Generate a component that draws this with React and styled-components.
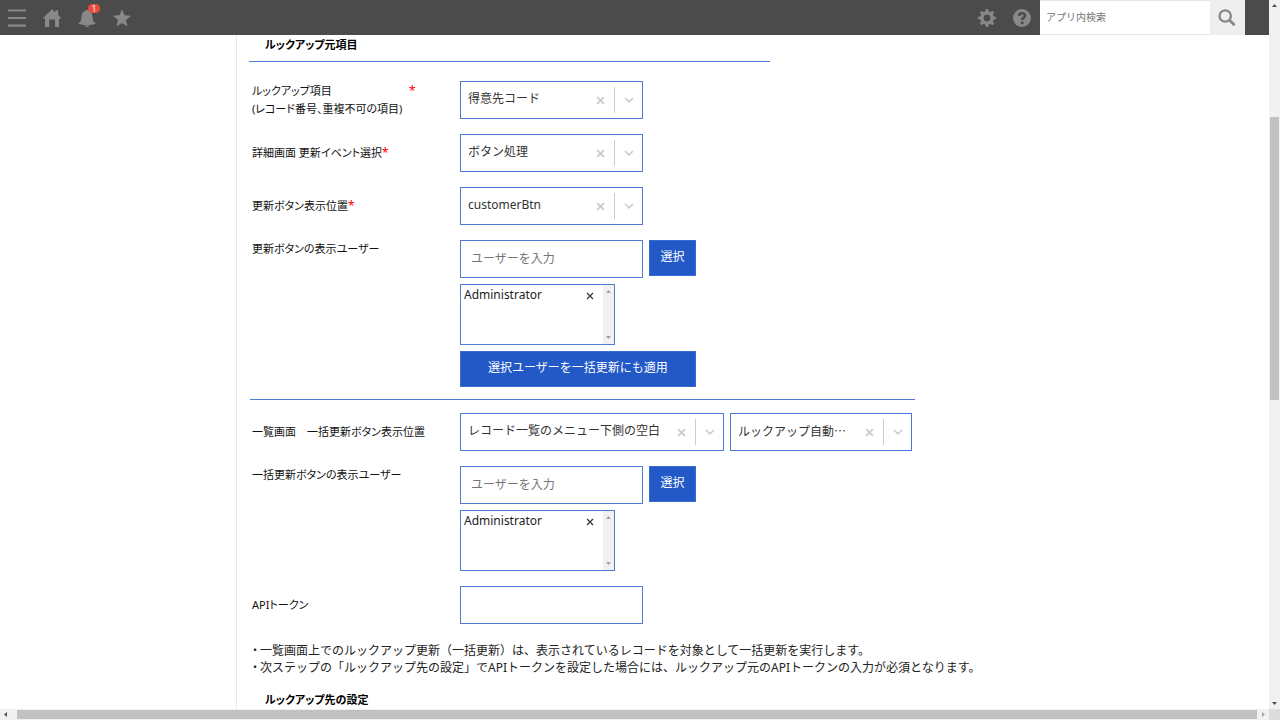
import React, { useState } from 'react'
import styled, { createGlobalStyle } from 'styled-components'

const GlobalStyle = createGlobalStyle`
  * {
    box-sizing: border-box;
  }
  body {
    margin: 0;
    background: #fff;
    color: #222;
    font-family: 'Noto Sans', 'Noto Sans CJK JP', sans-serif;
    font-size: 12px;
    line-height: 18px;
  }
  button, input, select {
    margin: 0;
    font: inherit;
    border-radius: 0;
  }
`

const Page = styled.div`
  display: grid;
  grid-template-columns: minmax(0, 1fr) 11px;
  grid-template-rows: 35px minmax(0, 1fr) 11px;
  height: 100vh;
  overflow: hidden;
`

const Header = styled.header`
  display: flex;
  justify-content: space-between;
  background: #4b4b4b;
  padding-right: 24px;
`

const HeaderGroup = styled.div`
  display: flex;
`

const IconButton = styled.button`
  position: relative;
  display: flex;
  align-items: center;
  justify-content: center;
  width: 35px;
  height: 35px;
  padding: 0 1px 0 0;
  border: none;
  background: none;
  color: #888;
  cursor: pointer;
`

const Badge = styled.span`
  position: absolute;
  top: 4px;
  right: 5px;
  width: 12px;
  height: 9px;
  border-radius: 5px;
  background: #e74c3c;
  color: #fff;
  font-size: 8px;
  line-height: 9px;
  text-align: center;
`

const Search = styled.form`
  display: flex;
`

const SearchInput = styled.input`
  width: 170px;
  height: 35px;
  padding: 0 6px 2px;
  border: 1px solid #e3e7e8;
  border-width: 1px 0;
  background: #fff;
  font-size: 10px;
  &::placeholder {
    color: #757575;
  }
`

const SearchButton = styled(IconButton)`
  background: #eee;
`

const Main = styled.main`
  min-height: 0;
  margin-left: 236px;
  border-left: 1px solid #e8e8e8;
  padding: 1px 0 0 12px;
  overflow: hidden;
`

const Title = styled.h2`
  margin: 0;
  padding-left: 16px;
  color: #000;
  font-size: 11px;
  font-weight: 700;
  line-height: 18px;
  font-feature-settings: 'palt';
`

const Divider = styled.hr`
  width: ${(props) => props.$width};
  margin: ${(props) => props.$margin};
  border: none;
  border-top: 1px solid #4f7bd3;
`

const Form = styled.div`
  display: flex;
  flex-direction: column;
  gap: 15px;
  padding-left: 3px;
`

const Row = styled.div`
  display: grid;
  grid-template-columns: 208px minmax(0, 1fr);
  align-items: ${(props) => (props.$top ? 'start' : 'center')};
`

const Label = styled.label`
  display: flex;
  color: #111;
  font-size: 11px;
  font-feature-settings: 'palt';
`

const LabelText = styled.span`
  min-width: ${(props) => (props.$wide ? '157px' : '0')};
`

const Required = styled.span`
  color: #f00;
  font-size: 12px;
`

const Line = styled.div`
  display: flex;
  gap: 6px;
`

const Stack = styled.div`
  display: flex;
  flex-direction: column;
  align-items: flex-start;
  gap: 6px;
`

const SelectBox = styled.div`
  display: flex;
  align-items: center;
  width: ${(props) => props.$width || '183px'};
  height: 38px;
  border: 1px solid #4f7bd3;
  background: #fff;
`

const SelectInput = styled.select`
  flex: 1;
  min-width: 0;
  height: 36px;
  padding: 0 0 2px 7px;
  border: none;
  outline: none;
  background: none;
  color: #333;
  appearance: none;
  font-family: ${(props) => (props.$cjk ? "'Noto Sans CJK JP', sans-serif" : 'inherit')};
`

const ClearButton = styled.button`
  display: flex;
  align-items: center;
  justify-content: center;
  width: 27px;
  height: 36px;
  padding: 0;
  border: none;
  background: none;
  color: #ccc;
`

const Separator = styled.span`
  width: 1px;
  height: 26px;
  background: #ccc;
`

const Chevron = styled.span`
  display: flex;
  justify-content: center;
  width: 27px;
  color: #ccc;
`

const TextInput = styled.input`
  width: 183px;
  height: 38px;
  padding: 0 10px 2px;
  border: 1px solid #4f7bd3;
  background: #fff;
  &::placeholder {
    color: #757575;
  }
`

const PrimaryButton = styled.button`
  width: ${(props) => props.$width || '47px'};
  height: 36px;
  padding: 0 0 2px;
  border: 1px solid #3a6acd;
  background: #2259c7;
  color: #fff;
  white-space: nowrap;
  cursor: pointer;
`

const UserList = styled.div`
  display: flex;
  width: 155px;
  height: 61px;
  border: 1px solid #4f7bd3;
`

const UserItem = styled.div`
  display: flex;
  flex: 1;
  align-items: center;
  justify-content: space-between;
  height: 20px;
  padding: 0 7px 0 3px;
`

const RemoveButton = styled.button`
  display: flex;
  padding: 3px 2px 2px;
  border: none;
  background: none;
  color: #333;
`

const ListScroll = styled.div`
  display: flex;
  flex-direction: column;
  align-items: center;
  justify-content: space-between;
  width: 11px;
  padding: 3px 0;
  background: #f1f1f1;
  color: #a3a3a3;
`

const Notes = styled.div`
  margin: 18px 0 15px;
  padding-left: 3px;
  color: #222;
`

const Note = styled.p`
  margin: 0;
  line-height: 17px;
`

const Bullet = styled.span`
  display: inline-block;
  width: 8px;
  font-feature-settings: 'palt';
`

const VerticalBar = styled.div`
  display: flex;
  flex-direction: column;
  align-items: center;
  grid-column: 2;
  grid-row: 1 / 3;
  background: #f1f1f1;
  color: #505050;
`

const HorizontalBar = styled.div`
  display: flex;
  align-items: center;
  grid-column: 1;
  grid-row: 3;
  background: #f1f1f1;
  color: #505050;
`

const Arrow = styled.span`
  display: flex;
  align-items: center;
  justify-content: center;
  width: 11px;
  height: 11px;
  color: ${(props) => (props.$off ? '#a3a3a3' : 'inherit')};
`

const Track = styled.div`
  flex: ${(props) => props.$size};
`

const Thumb = styled.div`
  flex: ${(props) => props.$size};
  width: 9px;
  background: #c1c1c1;
`

const WideThumb = styled.div`
  flex: 1;
  height: 9px;
  margin: 0 1px 0 6px;
  background: #c1c1c1;
`

const Corner = styled.div`
  background: #dcdcdc;
`

const Triangle = ({ points }) => (
  <svg width="7" height="7" viewBox="0 0 7 7" fill="currentColor" aria-hidden="true">
    <polygon points={points} />
  </svg>
)

const UP = '3.5,2 6,5 1,5'
const DOWN = '3.5,5 6,2 1,2'
const LEFT = '2,3.5 5,1 5,6'
const RIGHT = '5,3.5 2,1 2,6'

const Glyph = ({ children }) => (
  <svg width="18" height="18" viewBox="0 0 18 18" fill="currentColor" aria-hidden="true">
    {children}
  </svg>
)

const MenuIcon = () => (
  <Glyph>
    <path d="M0 .4h18v2.2H0zM0 7.9h18v2.2H0zM0 15.5h18v2.2H0z" />
  </Glyph>
)

const HomeIcon = () => (
  <Glyph>
    <path d="M9 .2 12.4 3.4V1.2h2.8v4.9L18 8.9l-1.1 1L16 9.1V18h-4V10.4H6.2V18H2V9.1l-.9.8-1.1-1z" />
  </Glyph>
)

const BellIcon = () => (
  <Glyph>
    <path d="M7.6 1.7a1.5 1.5 0 0 1 2.8 0c2.8.8 4 3 4.1 5.7.1 3.7.8 5.5 3.1 6.8-.3 1.2-4.2 1.8-8.6 1.8S.7 15.4.4 14.2c2.3-1.3 3-3.1 3.1-6.8.1-2.7 1.3-4.9 4.1-5.7z" />
    <path d="M7 16.4h4a2 2 0 0 1-4 0z" />
  </Glyph>
)

const StarIcon = () => (
  <Glyph>
    <path d="m9 .2 2.5 6.1 6.5.5-5 4.3 1.6 6.5L9 14.1l-5.6 3.5L5 11.1 0 6.8l6.5-.5z" />
  </Glyph>
)

const GearIcon = () => (
  <Glyph>
    <circle cx="9" cy="9" r="5.1" fill="none" stroke="currentColor" strokeWidth="3.4" />
    {[0, 45, 90, 135, 180, 225, 270, 315].map((angle) => (
      <path key={angle} d="M7.2 3 7.9 0h2.2l.7 3z" transform={`rotate(${angle} 9 9)`} />
    ))}
  </Glyph>
)

const HelpIcon = () => (
  <Glyph>
    <circle cx="9" cy="9" r="9" />
    <path
      d="M6.1 7C6.1 5 7.3 4.3 9 4.3s2.9.9 2.9 2.5c0 2.1-2.8 2-2.8 4.1"
      fill="none"
      stroke="#4b4b4b"
      strokeWidth="2.6"
    />
    <circle cx="9.1" cy="13.7" r="1.5" fill="#4b4b4b" />
  </Glyph>
)

const SearchIcon = () => (
  <Glyph>
    <circle cx="7.2" cy="7" r="5.7" fill="none" stroke="currentColor" strokeWidth="2.3" />
    <path d="m11.3 11 5.4 5.2" stroke="currentColor" strokeWidth="2.8" />
  </Glyph>
)

const CrossIcon = ({ size, stroke }) => (
  <svg width={size} height={size} viewBox="0 0 8 8" aria-hidden="true">
    <path d="m1 1 6 6M7 1 1 7" stroke="currentColor" strokeWidth={stroke} />
  </svg>
)

const Select = ({ id, value, label, width, cjk }) => {
  const [selected, setSelected] = useState(value)

  return (
    <SelectBox $width={width}>
      <SelectInput
        id={id}
        aria-label={label}
        $cjk={cjk}
        value={selected}
        onChange={(e) => setSelected(e.target.value)}
      >
        <option value="" />
        <option value={value}>{value}</option>
      </SelectInput>
      <ClearButton type="button" aria-label="クリア" onClick={() => setSelected('')}>
        <CrossIcon size={9} stroke={1.7} />
      </ClearButton>
      <Separator />
      <Chevron>
        <svg width="10" height="6" viewBox="0 0 10 6" fill="none" aria-hidden="true">
          <path d="m1 1 4 3.8L9 1" stroke="currentColor" strokeWidth="1.7" />
        </svg>
      </Chevron>
    </SelectBox>
  )
}

const UserPicker = ({ id, children }) => {
  const [users, setUsers] = useState(['Administrator'])

  return (
    <Stack>
      <Line>
        <TextInput id={id} type="text" placeholder="ユーザーを入力" />
        <PrimaryButton type="button">選択</PrimaryButton>
      </Line>
      <UserList>
        {users.map((user) => (
          <UserItem key={user}>
            {user}
            <RemoveButton type="button" aria-label="削除" onClick={() => setUsers([])}>
              <CrossIcon size={8} stroke={1.2} />
            </RemoveButton>
          </UserItem>
        ))}
        <ListScroll>
          <Triangle points={UP} />
          <Triangle points={DOWN} />
        </ListScroll>
      </UserList>
      {children}
    </Stack>
  )
}

const TopBar = () => (
  <Header>
    <HeaderGroup>
      <IconButton type="button" aria-label="メニュー"><MenuIcon /></IconButton>
      <IconButton type="button" aria-label="ホーム"><HomeIcon /></IconButton>
      <IconButton type="button" aria-label="通知">
        <BellIcon />
        <Badge>1</Badge>
      </IconButton>
      <IconButton type="button" aria-label="お気に入り"><StarIcon /></IconButton>
    </HeaderGroup>
    <HeaderGroup>
      <IconButton type="button" aria-label="設定"><GearIcon /></IconButton>
      <IconButton type="button" aria-label="ヘルプ"><HelpIcon /></IconButton>
      <Search onSubmit={(e) => e.preventDefault()}>
        <SearchInput type="text" placeholder="アプリ内検索" aria-label="アプリ内検索" />
        <SearchButton type="submit" aria-label="検索"><SearchIcon /></SearchButton>
      </Search>
    </HeaderGroup>
  </Header>
)

export default function App() {
  return (
    <Page>
      <GlobalStyle />
      <TopBar />
      <Main>
        <Title>ルックアップ元項目</Title>
        <Divider $width="521px" $margin="7px 0 19px" />
        <Form>
          <Row>
            <Label htmlFor="lookupField">
              <LabelText $wide>
                ルックアップ項目
                <br />
                (レコード番号、重複不可の項目)
              </LabelText>
              <Required>*</Required>
            </Label>
            <Select id="lookupField" value="得意先コード" />
          </Row>
          <Row>
            <Label htmlFor="updateEvent">
              <LabelText>詳細画面 更新イベント選択</LabelText>
              <Required>*</Required>
            </Label>
            <Select id="updateEvent" value="ボタン処理" />
          </Row>
          <Row>
            <Label htmlFor="buttonPlace">
              <LabelText>更新ボタン表示位置</LabelText>
              <Required>*</Required>
            </Label>
            <Select id="buttonPlace" value="customerBtn" />
          </Row>
          <Row $top>
            <Label htmlFor="buttonUsers">更新ボタンの表示ユーザー</Label>
            <UserPicker id="buttonUsers">
              <PrimaryButton type="button" $width="236px">選択ユーザーを一括更新にも適用</PrimaryButton>
            </UserPicker>
          </Row>
        </Form>
        <Divider $width="665px" $margin="12px 1px 13px" />
        <Form>
          <Row>
            <Label htmlFor="bulkPlace">一覧画面　一括更新ボタン表示位置</Label>
            <Line>
              <Select id="bulkPlace" value="レコード一覧のメニュー下側の空白" width="264px" />
              <Select id="bulkButton" label="一括更新ボタン" value="ルックアップ自動…" width="182px" cjk />
            </Line>
          </Row>
          <Row $top>
            <Label htmlFor="bulkUsers">一括更新ボタンの表示ユーザー</Label>
            <UserPicker id="bulkUsers" />
          </Row>
          <Row>
            <Label htmlFor="apiToken">APIトークン</Label>
            <TextInput id="apiToken" type="text" />
          </Row>
        </Form>
        <Notes>
          <Note>
            <Bullet>・</Bullet>一覧画面上でのルックアップ更新（一括更新）は、表示されているレコードを対象として一括更新を実行します。
          </Note>
          <Note>
            <Bullet>・</Bullet>次ステップの「ルックアップ先の設定」でAPIトークンを設定した場合には、ルックアップ元のAPIトークンの入力が必須となります。
          </Note>
        </Notes>
        <Title>ルックアップ先の設定</Title>
      </Main>
      <VerticalBar>
        <Arrow><Triangle points={UP} /></Arrow>
        <Track $size={106} />
        <Thumb $size={283} />
        <Track $size={298} />
        <Arrow><Triangle points={DOWN} /></Arrow>
      </VerticalBar>
      <HorizontalBar>
        <Arrow><Triangle points={LEFT} /></Arrow>
        <WideThumb />
        <Arrow $off><Triangle points={RIGHT} /></Arrow>
      </HorizontalBar>
      <Corner />
    </Page>
  )
}
